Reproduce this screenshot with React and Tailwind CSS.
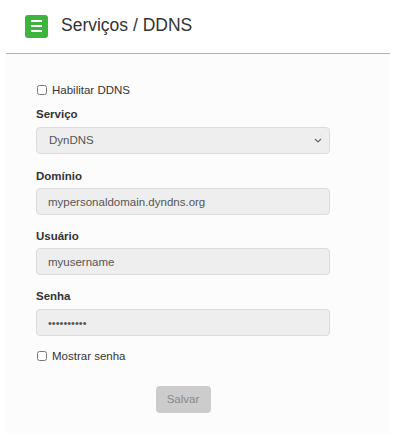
import { useState } from "react";

export default function App() {
  const [enabled, setEnabled] = useState(false);
  const [showPass, setShowPass] = useState(false);

  return (
    <div className="min-h-[435px] bg-white font-['Liberation_Sans',Arial,sans-serif] text-[#333]">
      {/* Header */}
      <div className="flex items-center h-[53px] pl-[25px] pb-[1px]">
        <div className="w-[23px] h-[23px] rounded-[3px] bg-[#3db43d] flex flex-col items-center justify-center gap-[3px]">
          <span className="block w-[11px] h-[2px] bg-white" />
          <span className="block w-[11px] h-[2px] bg-white" />
          <span className="block w-[11px] h-[2px] bg-white" />
        </div>
        <h1 className="ml-[13px] text-[17.5px] leading-none text-[#333]">Serviços / DDNS</h1>
      </div>

      {/* Panel */}
      <div className="mx-[6px] border-t border-[#86cf86] bg-[#fcfcfc] min-h-[381px] pl-[30px] pt-[29px] pb-[20px]">
        <div className="w-[294px] text-[11.5px]">
          <label className="flex items-center h-[14px] leading-[14px]">
            <input
              type="checkbox"
              checked={enabled}
              onChange={() => setEnabled(!enabled)}
              className="w-[10px] h-[10px] m-0 ml-[1px]"
            />
            <span className="ml-[5px]">Habilitar DDNS</span>
          </label>

          <div className="mt-[10px] font-bold leading-[14px]">Serviço</div>
          <div className="relative mt-[6px]">
            <select className="appearance-none w-full h-[27px] rounded-[4px] border border-[#dcdcdc] bg-[#eeeeee] pl-[12px] text-[11.5px] text-[#555] outline-none">
              <option>DynDNS</option>
            </select>
            <svg className="absolute right-[8px] top-[11px] pointer-events-none" width="8" height="5" viewBox="0 0 8 5">
              <path d="M1 1l3 3 3-3" fill="none" stroke="#666" strokeWidth="1.2" />
            </svg>
          </div>

          <div className="mt-[15px] font-bold leading-[14px]">Domínio</div>
          <input
            className="mt-[5px] block w-full h-[27px] rounded-[4px] border border-[#dcdcdc] bg-[#eeeeee] px-[11px] text-[11.5px] text-[#555] outline-none"
            defaultValue="mypersonaldomain.dyndns.org"
          />

          <div className="mt-[14px] font-bold leading-[14px]">Usuário</div>
          <input
            className="mt-[5px] block w-full h-[27px] rounded-[4px] border border-[#dcdcdc] bg-[#eeeeee] px-[11px] text-[11.5px] text-[#555] outline-none"
            defaultValue="myusername"
          />

          <div className="mt-[14px] font-bold leading-[14px]">Senha</div>
          <input
            type={showPass ? "text" : "password"}
            className="mt-[6px] block w-full h-[27px] rounded-[4px] border border-[#dcdcdc] bg-[#eeeeee] px-[11px] text-[11px] text-[#555] outline-none"
            defaultValue="1234567890"
          />

          <label className="mt-[13px] flex items-center h-[14px] leading-[14px]">
            <input
              type="checkbox"
              checked={showPass}
              onChange={() => setShowPass(!showPass)}
              className="w-[10px] h-[10px] m-0 ml-[1px]"
            />
            <span className="ml-[5px]">Mostrar senha</span>
          </label>

          <div className="flex justify-center mt-[23px]">
            <button
              disabled
              className="w-[55px] h-[27px] rounded-[4px] bg-[#cccccc] text-[11.5px] text-[#888]"
            >
              Salvar
            </button>
          </div>
        </div>
      </div>
    </div>
  );
}
